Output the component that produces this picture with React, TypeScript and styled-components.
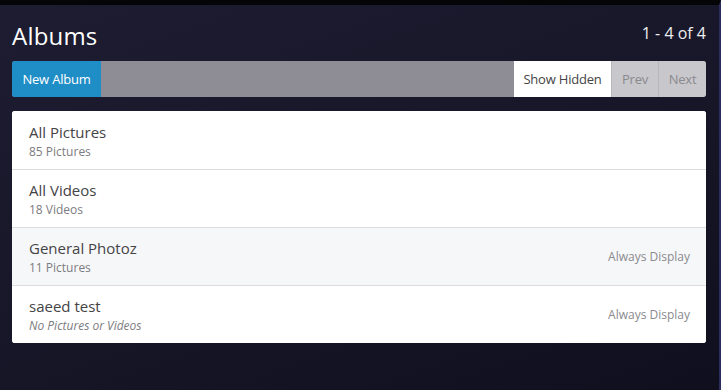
import * as React from "react";
import styled, { createGlobalStyle } from "styled-components";

const Global = createGlobalStyle`
  html, body { margin: 0; padding: 0; }
  body {
    font-family: "Open Sans", "Noto Sans", sans-serif;
    background: #141326;
  }
`;

const Page = styled.div`
  width: 721px;
  height: 390px;
  box-sizing: border-box;
  border-top: 5px solid #050508;
  border-right: 2px solid #2c2d5c;
  background: linear-gradient(160deg, #1d1c31 0%, #181729 50%, #0f0f1e 100%);
  padding: 0 13px 0 12px;
  overflow: hidden;
`;

const Header = styled.div`
  display: flex;
  align-items: center;
  justify-content: space-between;
  height: 56px;
`;

const Title = styled.h1`
  margin: 0;
  font-size: 24px;
  font-weight: 400;
  color: #ffffff;
  letter-spacing: 0.2px;
  padding-top: 4px;
`;

const Count = styled.div`
  font-size: 16px;
  color: #eeeeee;
`;

const Toolbar = styled.div`
  display: flex;
  height: 36px;
  border-radius: 3px;
  overflow: hidden;
  background: #8e8d95;
  margin-bottom: 14px;
`;

const Btn = styled.div<{ $variant: "primary" | "light" | "muted"; $w: number }>`
  display: flex;
  align-items: center;
  justify-content: center;
  width: ${(p) => p.$w}px;
  font-size: 13px;
  letter-spacing: -0.2px;
  box-sizing: border-box;
  background: ${(p) =>
    p.$variant === "primary" ? "#1f8dc6" : p.$variant === "light" ? "#ffffff" : "#c8c7cc"};
  color: ${(p) =>
    p.$variant === "primary" ? "#ffffff" : p.$variant === "light" ? "#444" : "#8a8a8e"};
  border-left: ${(p) => (p.$variant === "muted" ? "1px solid #b7b6bb" : "none")};
`;

const Spacer = styled.div`
  flex: 1;
`;

const Card = styled.div`
  background: #ffffff;
  border-radius: 3px;
  overflow: hidden;
`;

const Row = styled.div<{ $shaded?: boolean }>`
  display: flex;
  align-items: center;
  justify-content: space-between;
  height: 58px;
  box-sizing: border-box;
  padding: 0 16px 0 17px;
  background: ${(p) => (p.$shaded ? "#f6f7f9" : "#ffffff")};
  & + & {
    border-top: 1px solid #dcdcdf;
  }
`;

const Info = styled.div`
  display: flex;
  flex-direction: column;
  gap: 1px;
  padding-top: 1px;
`;

const Name = styled.div`
  font-size: 15px;
  color: #444446;
`;

const Sub = styled.div<{ $empty?: boolean }>`
  font-size: 12px;
  color: #7c7c80;
  font-style: ${(p) => (p.$empty ? "italic" : "normal")};
`;

const Status = styled.div`
  font-size: 12px;
  color: #8a8a8e;
`;

const albums = [
  { name: "All Pictures", sub: "85 Pictures" },
  { name: "All Videos", sub: "18 Videos" },
  { name: "General Photoz", sub: "11 Pictures", status: "Always Display", shaded: true },
  { name: "saeed test", sub: "No Pictures or Videos", status: "Always Display", empty: true },
];

export default function App() {
  return (
    <>
      <Global />
      <Page>
        <Header>
          <Title>Albums</Title>
          <Count>1 - 4 of 4</Count>
        </Header>
        <Toolbar>
          <Btn $variant="primary" $w={89}>New Album</Btn>
          <Spacer />
          <Btn $variant="light" $w={97}>Show Hidden</Btn>
          <Btn $variant="muted" $w={47}>Prev</Btn>
          <Btn $variant="muted" $w={48}>Next</Btn>
        </Toolbar>
        <Card>
          {albums.map((a) => (
            <Row key={a.name} $shaded={a.shaded}>
              <Info>
                <Name>{a.name}</Name>
                <Sub $empty={a.empty}>{a.sub}</Sub>
              </Info>
              {a.status && <Status>{a.status}</Status>}
            </Row>
          ))}
        </Card>
      </Page>
    </>
  );
}
